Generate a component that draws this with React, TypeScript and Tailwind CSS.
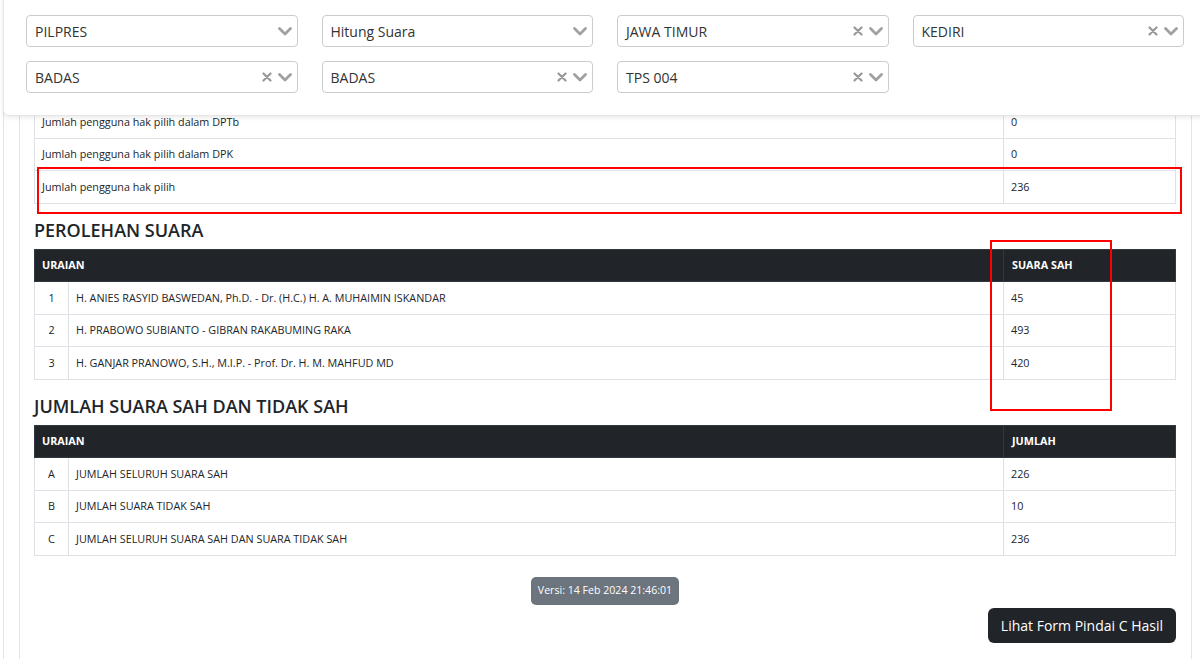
import React from "react";

const font = { fontFamily: '"Open Sans", "Noto Sans", sans-serif' };

function Chevron() {
  return (
    <svg width="14" height="9" viewBox="0 0 14 9" className="shrink-0">
      <path d="M1.5 1.5 L7 7 L12.5 1.5" fill="none" stroke="#a0a0a0" strokeWidth="2.8" strokeLinecap="round" strokeLinejoin="round" />
    </svg>
  );
}

function Clear() {
  return (
    <svg width="10" height="10" viewBox="0 0 10 10" className="shrink-0">
      <path d="M1.5 1.5 L8.5 8.5 M8.5 1.5 L1.5 8.5" fill="none" stroke="#999" strokeWidth="2.2" strokeLinecap="round" />
    </svg>
  );
}

function Select({ label, clearable }: { label: string; clearable?: boolean }) {
  return (
    <div className="flex h-[32px] items-center rounded-[4px] border border-[#cccccc] bg-white pl-[8px] pr-[5px]">
      <span className="flex-1 text-[14px] text-[#333333]">{label}</span>
      {clearable && (
        <span className="mr-[6px] flex items-center">
          <Clear />
        </span>
      )}
      <Chevron />
    </div>
  );
}

function Overlay() {
  return (
    <div className="absolute left-[3px] right-[-10px] top-[-10px] h-[126px] rounded-b-[6px] border border-[#e6e6e6] bg-white shadow-[0_2px_4px_rgba(0,0,0,0.08)]">
      <div className="grid grid-cols-4 gap-x-[24px] gap-y-[14px] pl-[22px] pr-[25px] pt-[24px]">
        <Select label="PILPRES" />
        <Select label="Hitung Suara" />
        <Select label="JAWA TIMUR" clearable />
        <Select label="KEDIRI" clearable />
        <Select label="BADAS" clearable />
        <Select label="BADAS" clearable />
        <Select label="TPS 004" clearable />
      </div>
    </div>
  );
}

const td = "border border-[#dee2e6] px-[7px] align-middle";

export default function App() {
  return (
    <div className="relative h-[659px] overflow-hidden bg-white text-[#212529]" style={font}>
      <div className="ml-[3px] h-full border-l border-[#e3e3e3]">
        <div className="ml-[15px] mr-[8px] h-full border-x border-[#e3e3e3] pl-[14px] pr-[15px] pt-[105px]">
          <table className="w-full table-fixed border-collapse text-[10.8px]">
            <colgroup>
              <col className="w-[969px]" />
              <col />
            </colgroup>
            <tbody>
              <tr className="h-[33px]">
                <td className={td}>Jumlah pengguna hak pilih dalam DPTb</td>
                <td className={td}>0</td>
              </tr>
              <tr className="h-[32px]">
                <td className={td}>Jumlah pengguna hak pilih dalam DPK</td>
                <td className={td}>0</td>
              </tr>
              <tr className="h-[33px]">
                <td className={td}>Jumlah pengguna hak pilih</td>
                <td className={td}>236</td>
              </tr>
            </tbody>
          </table>

          <h2 className="mb-[7px] mt-[14px] text-[18px] font-[550] leading-[24px] text-[#212529]">PEROLEHAN SUARA</h2>
          <table className="w-full table-fixed border-collapse text-[10.8px]">
            <colgroup>
              <col className="w-[34px]" />
              <col className="w-[935px]" />
              <col />
            </colgroup>
            <thead>
              <tr className="h-[32px] bg-[#212529] text-white">
                <th colSpan={2} className="border border-[#32383e] px-[7px] text-left font-bold">URAIAN</th>
                <th className="border border-[#32383e] px-[8px] text-left font-bold">SUARA SAH</th>
              </tr>
            </thead>
            <tbody>
              <tr className="h-[33px]">
                <td className={td + " text-center"}>1</td>
                <td className={td}>H. ANIES RASYID BASWEDAN, Ph.D. - Dr. (H.C.) H. A. MUHAIMIN ISKANDAR</td>
                <td className={td}>45</td>
              </tr>
              <tr className="h-[32px]">
                <td className={td + " text-center"}>2</td>
                <td className={td}>H. PRABOWO SUBIANTO - GIBRAN RAKABUMING RAKA</td>
                <td className={td}>493</td>
              </tr>
              <tr className="h-[33px]">
                <td className={td + " text-center"}>3</td>
                <td className={td}>H. GANJAR PRANOWO, S.H., M.I.P. - Prof. Dr. H. M. MAHFUD MD</td>
                <td className={td}>420</td>
              </tr>
            </tbody>
          </table>

          <h2 className="mb-[7px] mt-[14px] text-[18px] font-[550] leading-[24px] text-[#212529]">JUMLAH SUARA SAH DAN TIDAK SAH</h2>
          <table className="w-full table-fixed border-collapse text-[10.8px]">
            <colgroup>
              <col className="w-[34px]" />
              <col className="w-[935px]" />
              <col />
            </colgroup>
            <thead>
              <tr className="h-[32px] bg-[#212529] text-white">
                <th colSpan={2} className="border border-[#32383e] px-[7px] text-left font-bold">URAIAN</th>
                <th className="border border-[#32383e] px-[8px] text-left font-bold">JUMLAH</th>
              </tr>
            </thead>
            <tbody>
              <tr className="h-[33px]">
                <td className={td + " text-center"}>A</td>
                <td className={td}>JUMLAH SELURUH SUARA SAH</td>
                <td className={td}>226</td>
              </tr>
              <tr className="h-[32px]">
                <td className={td + " text-center"}>B</td>
                <td className={td}>JUMLAH SUARA TIDAK SAH</td>
                <td className={td}>10</td>
              </tr>
              <tr className="h-[33px]">
                <td className={td + " text-center"}>C</td>
                <td className={td}>JUMLAH SELURUH SUARA SAH DAN SUARA TIDAK SAH</td>
                <td className={td}>236</td>
              </tr>
            </tbody>
          </table>

          <div className="mt-[21px] flex justify-center">
            <span className="flex h-[28px] items-center rounded-[5px] bg-[#6c757d] px-[7px] text-[10.6px] text-white">Versi: 14 Feb 2024 21:46:01</span>
          </div>
          <div className="mt-[3px] flex justify-end">
            <button className="flex h-[35px] items-center rounded-[6px] bg-[#212529] px-[13px] text-[14px] text-white">Lihat Form Pindai C Hasil</button>
          </div>
        </div>
      </div>

      <div className="pointer-events-none absolute left-[37px] top-[167px] h-[47px] w-[1145px] border-2 border-[#ff0000]" />
      <div className="pointer-events-none absolute left-[990px] top-[240px] h-[171px] w-[122px] border-2 border-[#ff0000]" />

      <Overlay />
    </div>
  );
}
